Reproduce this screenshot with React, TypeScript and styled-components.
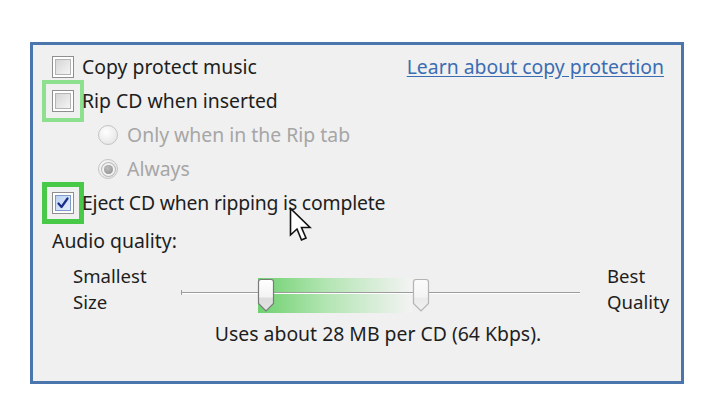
import React from "react";
import styled, { createGlobalStyle } from "styled-components";

const Global = createGlobalStyle`
  html, body { margin: 0; padding: 0; background: #ffffff; }
  body { font-family: "Noto Sans", "Open Sans", sans-serif; }
`;

const Page = styled.div`
  position: relative;
  width: 713px;
  height: 413px;
  box-sizing: border-box;
  padding: 42px 0 0 30px;
`;

const Panel = styled.div`
  width: 654px;
  height: 342px;
  box-sizing: border-box;
  border: 3px solid #4a76ad;
  background: #f0f0f0;
  padding: 5px 17px 0 19px;
  display: flex;
  flex-direction: column;
  font-size: 19.4px;
`;

const Row = styled.div<{ $indent?: number; $top?: number }>`
  display: flex;
  align-items: center;
  height: 34px;
  padding-left: ${(p) => p.$indent ?? 0}px;
  margin-top: ${(p) => p.$top ?? 0}px;
`;

const Label = styled.span<{ $disabled?: boolean; $tight?: boolean }>`
  line-height: 24px;
  color: ${(p) => (p.$disabled ? "#a6a6a6" : "#1e1e1e")};
  white-space: nowrap;
  letter-spacing: ${(p) => (p.$tight ? "-0.2px" : "0")};
`;

const Link = styled.a`
  margin-left: auto;
  line-height: 24px;
  color: #3b6db3;
  text-decoration: underline;
  text-underline-offset: 2px;
  cursor: pointer;
  white-space: nowrap;
`;

const Box = styled.span<{ $mark?: string; $markWidth?: number }>`
  flex: none;
  width: 22px;
  height: 22px;
  box-sizing: border-box;
  border: 1px solid #8e8f8f;
  background: #ffffff;
  padding: 2px;
  display: flex;
  margin-right: 8px;
  outline: ${(p) => (p.$mark ? `${p.$markWidth ?? 4}px solid ${p.$mark}` : "none")};
  outline-offset: ${(p) => 10 - (p.$markWidth ?? 4)}px;
`;

const BoxInner = styled.span<{ $checked?: boolean }>`
  flex: 1;
  border: 1px solid ${(p) => (p.$checked ? "#7d9ccb" : "#b3b3b3")};
  background: ${(p) =>
    p.$checked
      ? "linear-gradient(135deg, #bcd3f2 0%, #e6effb 100%)"
      : "linear-gradient(135deg, #d6d6d6 0%, #f4f4f4 100%)"};
  display: flex;
  align-items: center;
  justify-content: center;
`;

const Radio = styled.span<{ $checked?: boolean }>`
  flex: none;
  width: 20px;
  height: 20px;
  box-sizing: border-box;
  border-radius: 50%;
  border: 1px solid #c4c4c4;
  background: radial-gradient(circle at 40% 35%, #ffffff 0%, #ececec 60%, #e0e0e0 100%);
  margin-right: 9px;
  display: flex;
  align-items: center;
  justify-content: center;
  &::after {
    content: "";
    display: ${(p) => (p.$checked ? "block" : "none")};
    width: 9px;
    height: 9px;
    border-radius: 50%;
    background: radial-gradient(circle at 40% 35%, #bdbdbd 0%, #8c8c8c 100%);
    box-shadow: 0 0 0 2px #f2f2f2, 0 0 0 3px #b9b9b9;
  }
`;

const Quality = styled.div`
  display: grid;
  grid-template-columns: 108px 399px auto;
  align-items: center;
  padding-left: 21px;
  margin-top: 5px;
  height: 52px;
`;

const Stack = styled.div<{ $gap?: number }>`
  display: flex;
  flex-direction: column;
  font-size: 18.6px;
  line-height: 26px;
  color: #1e1e1e;
  padding-left: ${(p) => p.$gap ?? 0}px;
  white-space: nowrap;
`;

const Slider = styled.div`
  position: relative;
  height: 52px;
`;

const Track = styled.div`
  position: absolute;
  left: 0;
  right: 0;
  top: 29px;
  height: 1px;
  background: #9c9c9c;
  border-bottom: 1px solid #ffffff;
  &::before {
    content: "";
    position: absolute;
    left: 0;
    top: -2px;
    width: 1px;
    height: 5px;
    background: #9c9c9c;
  }
`;

const Fill = styled.div`
  position: absolute;
  top: 15px;
  height: 35px;
  background: linear-gradient(90deg, rgba(88, 204, 88, 0.85) 0%, rgba(130, 220, 130, 0.55) 45%, rgba(255, 255, 255, 0.2) 100%);
`;

const Thumb = styled.svg`
  position: absolute;
  top: 15px;
  margin-left: -9px;
  width: 18px;
  height: 35px;
`;

const Caption = styled.div`
  margin-top: 7px;
  text-align: center;
  line-height: 24px;
  color: #1e1e1e;
  padding-left: 40px;
`;

const Pointer = styled.svg`
  position: absolute;
  left: 289px;
  top: 207px;
  width: 24px;
  height: 36px;
`;

function Check({ checked, mark, markWidth }: { checked?: boolean; mark?: string; markWidth?: number }) {
  return (
    <Box $mark={mark} $markWidth={markWidth}>
      <BoxInner $checked={checked}>
        {checked && (
          <svg width="12" height="12" viewBox="0 0 12 12">
            <path d="M1.5 6.5 L4.5 10 L10.5 1.5" fill="none" stroke="#1c2d8c" strokeWidth="2.2" strokeLinejoin="round" strokeLinecap="round" />
          </svg>
        )}
      </BoxInner>
    </Box>
  );
}

function SliderThumb({ pos, faded }: { pos: number; faded?: boolean }) {
  const stroke = faded ? "#b4b4b4" : "#7a7a7a";
  const id = faded ? "thumbFaded" : "thumbMain";
  return (
    <Thumb viewBox="0 0 18 35" style={{ left: `${pos}%` }}>
      <defs>
        <linearGradient id={id} x1="0" y1="0" x2="0" y2="1">
          <stop offset="0" stopColor={faded ? "#fbfbfb" : "#ffffff"} />
          <stop offset="0.55" stopColor={faded ? "#f4f4f4" : "#f3f3f3"} />
          <stop offset="0.6" stopColor={faded ? "#ebebeb" : "#dcdcdc"} />
          <stop offset="1" stopColor={faded ? "#f0f0f0" : "#e4e4e4"} />
        </linearGradient>
      </defs>
      <path
        d="M1.5 4 Q1.5 1.5 4 1.5 H14 Q16.5 1.5 16.5 4 V25.5 L9 33 L1.5 25.5 Z"
        fill={`url(#${id})`}
        stroke={stroke}
        strokeWidth="1.2"
      />
    </Thumb>
  );
}

export default function App() {
  return (
    <>
      <Global />
      <Page>
        <Panel>
          <Row>
            <Check />
            <Label>Copy protect music</Label>
            <Link>Learn about copy protection</Link>
          </Row>
          <Row>
            <Check mark="#8de08d" markWidth={4} />
            <Label>Rip CD when inserted</Label>
          </Row>
          <Row $indent={46}>
            <Radio />
            <Label $disabled>Only when in the Rip tab</Label>
          </Row>
          <Row $indent={46}>
            <Radio $checked />
            <Label $disabled>Always</Label>
          </Row>
          <Row>
            <Check checked mark="#48c948" markWidth={5} />
            <Label $tight>Eject CD when ripping is complete</Label>
          </Row>
          <Row $top={4}>
            <Label>Audio quality:</Label>
          </Row>
          <Quality>
            <Stack>
              <span>Smallest</span>
              <span>Size</span>
            </Stack>
            <Slider>
              <Fill style={{ left: "19.3%", width: "38.7%" }} />
              <Track />
              <SliderThumb pos={21.3} />
              <SliderThumb pos={60.2} faded />
            </Slider>
            <Stack $gap={27}>
              <span>Best</span>
              <span>Quality</span>
            </Stack>
          </Quality>
          <Caption>Uses about 28 MB per CD (64 Kbps).</Caption>
        </Panel>
        <Pointer viewBox="0 0 24 36">
          <path
            d="M1.5 1.5 V28 L8 22 L12.5 33 L17 31 L12.5 20.5 H21 Z"
            fill="#ffffff"
            stroke="#111111"
            strokeWidth="1.6"
            strokeLinejoin="miter"
          />
        </Pointer>
      </Page>
    </>
  );
}
